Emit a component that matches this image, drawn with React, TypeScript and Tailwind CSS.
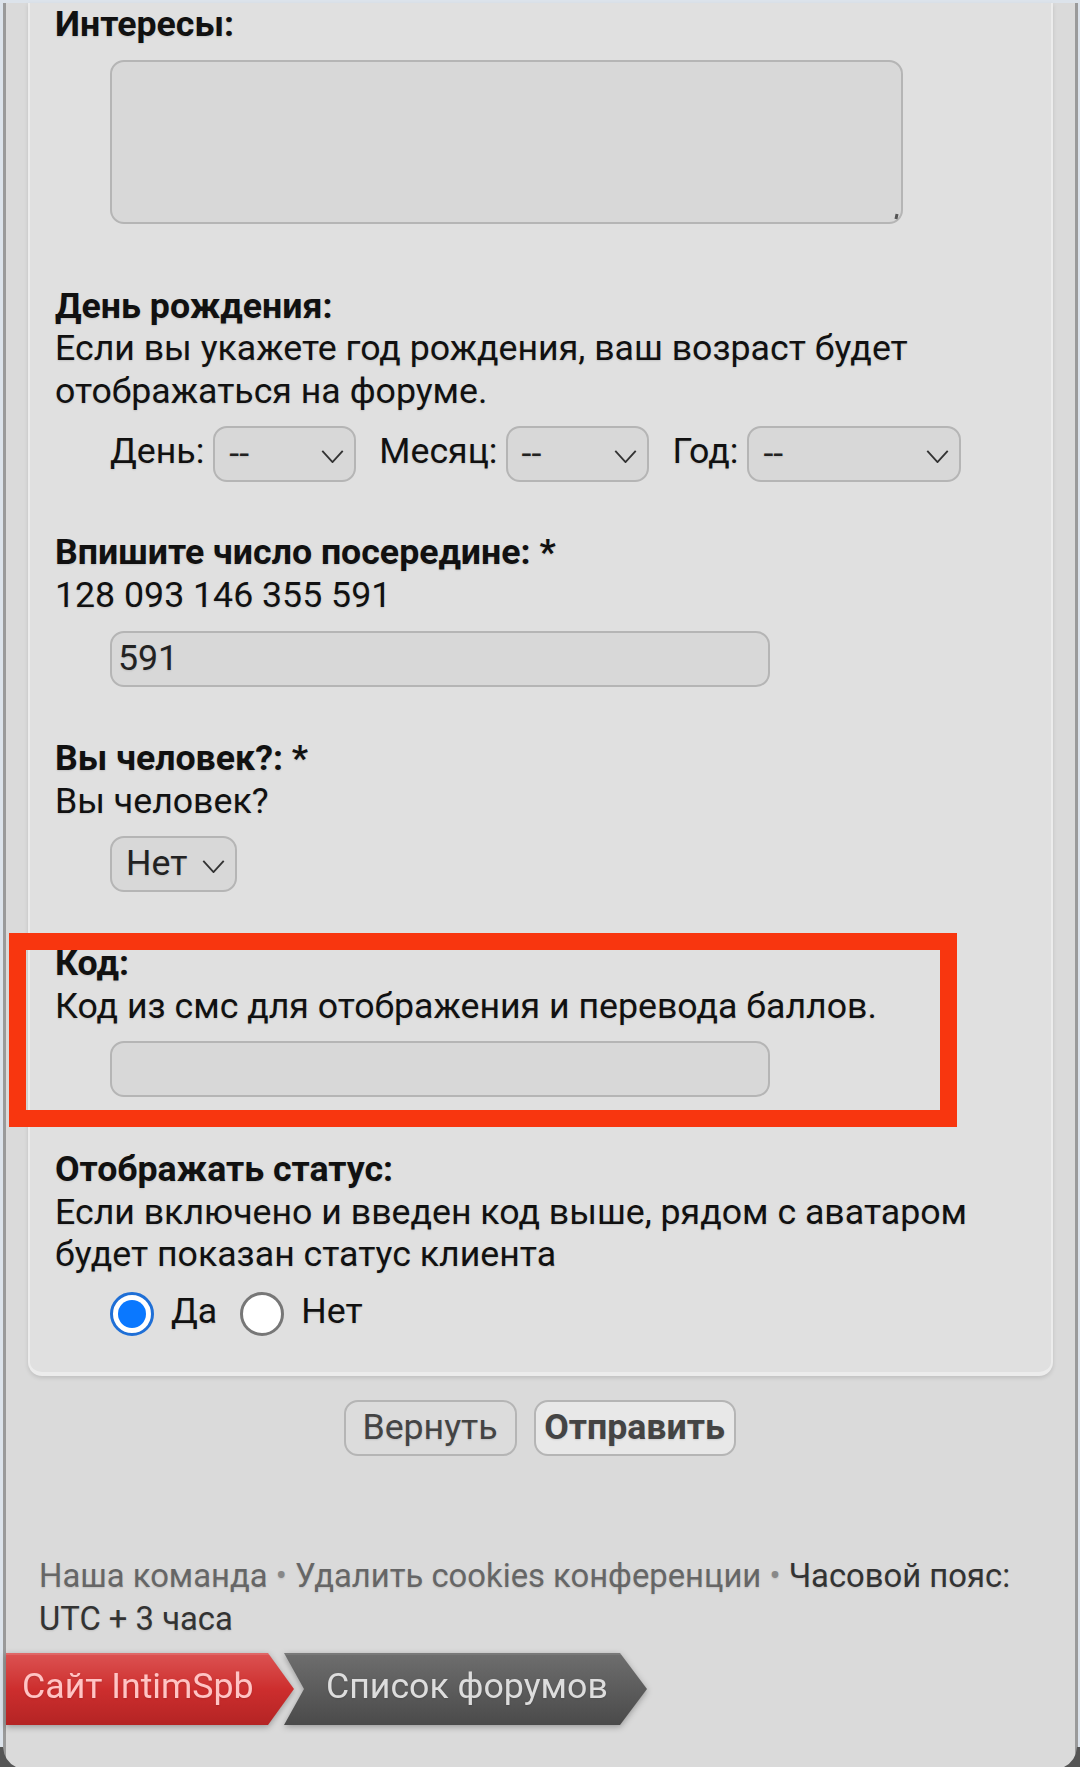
const labelCls = "font-bold leading-[42.5px]";
const descCls = "leading-[42.5px]";
const fieldCls =
  "h-[56px] rounded-[14px] border-2 border-[#b5b5b5] bg-[#d8d8d8] text-[#222]";

function Chevron({ className }: { className: string }) {
  return (
    <svg viewBox="0 0 24 14" className={className} fill="none" stroke="#333" strokeWidth="2">
      <path d="M1 1l11 12L23 1" />
    </svg>
  );
}

function Select({ label, width }: { label: string; width: string }) {
  return (
    <div className={`${fieldCls} ${width} relative flex items-center pl-[14px]`}>
      <span>{label}</span>
      <Chevron className="absolute right-[10px] top-[22px] h-[13px] w-[23px]" />
    </div>
  );
}

function Radio({ checked }: { checked?: boolean }) {
  if (checked) {
    return (
      <span className="flex h-[44px] w-[44px] shrink-0 items-center justify-center rounded-full border-[3px] border-[#1f6fd6] bg-white">
        <span className="h-[28px] w-[28px] rounded-full bg-[#0a78ff]" />
      </span>
    );
  }
  return <span className="block h-[44px] w-[44px] shrink-0 rounded-full border-[3px] border-[#777] bg-white" />;
}

function Corner({ className }: { className: string }) {
  return (
    <svg viewBox="0 0 16 20" className={className}>
      <path d="M0 0h3q1 14 13 20H0z" fill="#555" />
    </svg>
  );
}

export default function App() {
  return (
    <div className="relative h-[1767px] w-[1080px] overflow-hidden bg-[#dce3eb] pt-[3px] font-['Roboto',sans-serif] text-[35.7px] text-[#111] [text-shadow:0_1px_2px_rgba(0,0,0,0.12)]">
      <div className="ml-[3px] mr-[2px] h-[1780px] border-x-[3px] border-[#9a9a9a] bg-[#dadada]">
        <div className="mx-[22px] h-[1373px] rounded-b-[14px] border-x-2 border-b-[4px] border-[#ececec] bg-[#e0e0e0] pl-[25px] [box-shadow:0_2px_4px_rgba(0,0,0,0.12)]">
          <div className={labelCls}>Интересы:</div>
          <div className="relative ml-[55px] mt-[14px] h-[164px] w-[793px] rounded-[14px] border-2 border-[#b5b5b5] bg-[#d8d8d8]">
            <span className="absolute bottom-[3px] right-[3px] h-[5px] w-[3px] rotate-12 bg-[#555]" />
          </div>

          <div className={`${labelCls} mt-[61px]`}>День рождения:</div>
          <div className={`${descCls} w-[880px]`}>
            Если вы укажете год рождения, ваш возраст будет отображаться на форуме.
          </div>
          <div className="ml-[55px] mt-[14px] flex items-center">
            <span className="-mt-[4px] mr-[9px]">День:</span>
            <Select label="--" width="w-[143px]" />
            <span className="-mt-[4px] ml-[23px] mr-[8px]">Месяц:</span>
            <Select label="--" width="w-[143px]" />
            <span className="-mt-[4px] ml-[24px] mr-[9px]">Год:</span>
            <Select label="--" width="w-[214px]" />
          </div>

          <div className={`${labelCls} mt-[49px]`}>Впишите число посередине: *</div>
          <div className={descCls}>128 093 146 355 591</div>
          <div className={`${fieldCls} ml-[55px] mt-[15px] flex w-[660px] items-center pl-[6px]`}>591</div>

          <div className={`${labelCls} mt-[50px]`}>Вы человек?: *</div>
          <div className={descCls}>Вы человек?</div>
          <div className="ml-[55px] mt-[14px]">
            <div className={`${fieldCls} relative flex w-[127px] items-center pl-[14px]`}>
              Нет
              <Chevron className="absolute right-[10px] top-[22px] h-[13px] w-[23px]" />
            </div>
          </div>

          <div className={`${labelCls} mt-[50px]`}>Код:</div>
          <div className={descCls}>Код из смс для отображения и перевода баллов.</div>
          <div className={`${fieldCls} ml-[55px] mt-[14px] w-[660px]`} />

          <div className={`${labelCls} mt-[51px]`}>Отображать статус:</div>
          <div className={`${descCls} w-[950px]`}>
            Если включено и введен код выше, рядом с аватаром будет показан статус клиента
          </div>
          <div className="ml-[55px] mt-[14px] flex items-center">
            <Radio checked />
            <span className="-mt-[5px] ml-[17px]">Да</span>
            <span className="ml-[23px]">
              <Radio />
            </span>
            <span className="-mt-[5px] ml-[17px]">Нет</span>
          </div>
        </div>

        <div className="mt-[24px] flex justify-center gap-[17px] pr-[2px] text-[#444]">
          <div className="flex h-[56px] w-[173px] items-center justify-center rounded-[14px] border-2 border-[#b5b5b5] bg-[#dcdcdc]">
            Вернуть
          </div>
          <div className="flex h-[56px] w-[202px] items-center justify-center rounded-[14px] border-2 border-[#b5b5b5] bg-[#e8e8e8] font-bold">
            Отправить
          </div>
        </div>

        <div className="mt-[99px] pl-[33px] text-[32.8px] leading-[42.5px] text-[#666]">
          <div>
            Наша команда <span className="text-[#888]">•</span> Удалить cookies конференции{" "}
            <span className="text-[#888]">•</span> <span className="text-[#333]">Часовой пояс:</span>
          </div>
          <div className="text-[#333]">UTC + 3 часа</div>
        </div>

        <div className="mt-[13px] flex drop-shadow-[0_2px_3px_rgba(0,0,0,0.3)]">
          <div className="flex h-[72px] w-[288px] items-center bg-gradient-to-b from-[#dc5252] via-[#cd2e2e] to-[#b42424] pb-[4px] pl-[16px] text-[#ffc4c4] shadow-[inset_0_2px_0_rgba(255,255,255,0.12)] [clip-path:polygon(0_0,262px_0,100%_50%,262px_100%,0_100%)]">
            Сайт IntimSpb
          </div>
          <div className="-ml-[10px] flex h-[72px] w-[363px] items-center bg-gradient-to-b from-[#6e6e6e] via-[#5c5c5c] to-[#4a4a4a] pb-[4px] pl-[42px] text-[#ddd] shadow-[inset_0_2px_0_rgba(255,255,255,0.08)] [clip-path:polygon(0_0,336px_0,100%_50%,336px_100%,0_100%,20px_50%)]">
            Список форумов
          </div>
        </div>
      </div>

      <Corner className="absolute bottom-0 left-0 h-[20px] w-[16px]" />
      <Corner className="absolute bottom-0 right-0 h-[20px] w-[16px] -scale-x-100" />
      <div className="pointer-events-none absolute left-[9px] top-[933px] h-[194px] w-[948px] border-[17px] border-[#f8360f]" />
    </div>
  );
}
